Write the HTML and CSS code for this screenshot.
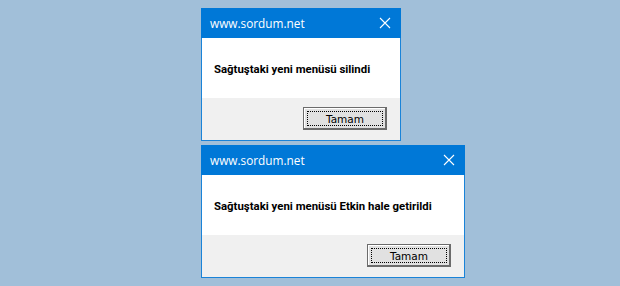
FILE: index.html
```html
<!DOCTYPE html>
<html lang="tr">
<head>
<meta charset="utf-8">
<title>sordum.net</title>
<link rel="stylesheet" href="styles.css">
</head>
<body>
<div class="stack">

    <div class="dialog small">
        <div class="titleBar">
            <span class="titleText">www.sordum.net</span>
            <svg class="closeIcon" width="12" height="12" viewBox="0 0 12 12">
                <path d="M1 1 L11 11 M11 1 L1 11" stroke="#fff" stroke-width="1.1" fill="none"/>
            </svg>
        </div>
        <div class="message">Sağtuştaki yeni menüsü silindi</div>
        <div class="footer">
            <div class="button"><span class="focusRect">Tamam</span></div>
        </div>
    </div>

    <div class="dialog wide">
        <div class="titleBar">
            <span class="titleText">www.sordum.net</span>
            <svg class="closeIcon" width="12" height="12" viewBox="0 0 12 12">
                <path d="M1 1 L11 11 M11 1 L1 11" stroke="#fff" stroke-width="1.1" fill="none"/>
            </svg>
        </div>
        <div class="message">Sağtuştaki yeni menüsü Etkin hale getirildi</div>
        <div class="footer">
            <div class="button"><span class="focusRect">Tamam</span></div>
        </div>
    </div>

</div>
</body>
</html>
```

FILE: styles.css
```css
html, body
{
    margin: 0;
    padding: 0;
}

body
{
    background-color: #a1bfd9;
    width: 620px;
    height: 286px;
    overflow: hidden;
}

.stack
{
    display: flex;
    flex-direction: column;
    align-items: flex-start;
    gap: 4px;
    padding-top: 8px;
    padding-left: 201px;
}

.dialog
{
    border: 1px solid #1a83d8;
    border-top: none;
    background-color: #fff;
    display: flex;
    flex-direction: column;
}

.small
{
    width: 198px;
}

.wide
{
    width: 262px;
}

.titleBar
{
    background-color: #0078d7;
    height: 30px;
    margin: 0 -1px;
    display: flex;
    align-items: center;
    justify-content: space-between;
    padding-left: 9px;
    padding-right: 10px;
}

.titleText
{
    color: #fff;
    font-family: "Open Sans", "Liberation Sans", sans-serif;
    font-size: 11.8px;
    padding-bottom: 1px;
}

.closeIcon
{
    display: block;
}

.message
{
    height: 60px;
    display: flex;
    align-items: center;
    padding-left: 12px;
    padding-top: 1px;
    box-sizing: border-box;
    font-family: Roboto, "Liberation Sans", sans-serif;
    font-weight: bold;
    font-size: 11.4px;
    color: #000;
}

.footer
{
    background-color: #f0f0f0;
    height: 42px;
    display: flex;
    justify-content: flex-end;
    align-items: flex-start;
    padding-top: 9px;
    padding-right: 13px;
    box-sizing: border-box;
}

.button
{
    width: 84px;
    height: 23px;
    box-sizing: border-box;
    border: 1px solid #6b6b6b;
    box-shadow: inset -1px -1px #6b6b6b, inset 1px 1px #fff;
    background-color: #e1e1e1;
    padding: 3px;
    display: flex;
}

.focusRect
{
    flex: 1;
    border: 1px dotted #000;
    display: flex;
    align-items: center;
    justify-content: center;
    font-family: "DejaVu Sans", Verdana, sans-serif;
    font-size: 10.5px;
    color: #000;
}
```
